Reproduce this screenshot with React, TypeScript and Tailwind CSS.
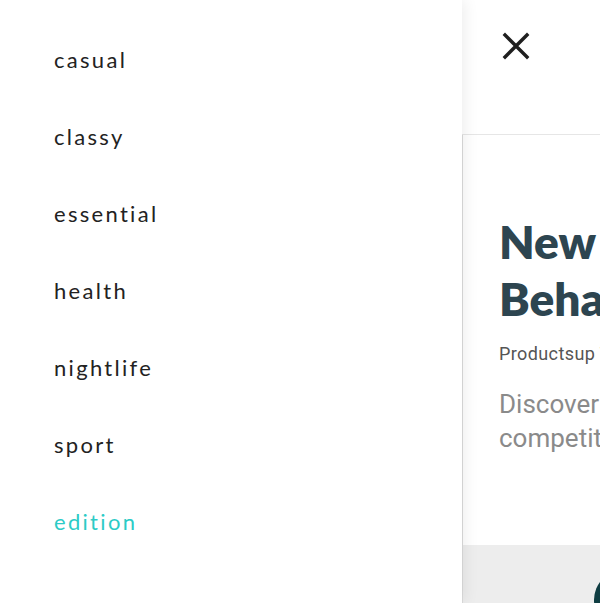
import React from 'react';

const MENU_ITEMS = ['casual', 'classy', 'essential', 'health', 'nightlife', 'sport', 'edition'];

const App: React.FC = () => {
    return (
        <div className="flex h-[603px] w-[600px] overflow-hidden bg-white">
            <aside className="relative z-10 w-[462px] shrink-0 bg-white pt-[44px] pl-[54px] shadow-[3px_0_14px_rgba(0,0,0,0.07)]">
                <ul className="flex flex-col gap-[45px]" style={{ fontFamily: 'Lato, "Open Sans", sans-serif' }}>
                    {MENU_ITEMS.map((item) => (
                        <li
                            key={item}
                            className={`h-[32px] text-[22px] leading-[32px] tracking-[2.3px] ${item === 'edition' ? 'text-[#2ccbc6]' : 'text-[#222222]'}`}
                        >
                            {item}
                        </li>
                    ))}
                </ul>
            </aside>
            <main className="flex min-w-0 flex-1 flex-col bg-white">
                <header className="flex h-[135px] shrink-0 items-start border-b border-[#e6e6e6] pt-[31px] pl-[39px]">
                    <svg width="30" height="30" viewBox="0 0 30 30" fill="none" stroke="#1f1f1f" strokeWidth="3.4" strokeLinecap="square">
                        <path d="M4 4L26 26M26 4L4 26" />
                    </svg>
                </header>
                <section className="flex flex-1 flex-col overflow-hidden border-l border-[#dcdcdc] bg-white">
                    <div className="h-[410px] shrink-0 pt-[78px] pl-[36px] whitespace-nowrap" style={{ fontFamily: 'Roboto, "Liberation Sans", sans-serif' }}>
                        <h1 className="text-[46px] leading-[57px] text-[#2d4550]" style={{ fontFamily: 'Lato, "Noto Sans", sans-serif', fontWeight: 800 }}>
                            New Consumer
                            <br />
                            Behaviors in 2021
                        </h1>
                        <p className="mt-[15px] text-[18px] leading-[24px] tracking-[0.4px] text-[#555555]">Productsup Team</p>
                        <p className="mt-[21px] text-[26px] leading-[34px] text-[#8a8a8a]">
                            Discover how
                            <br />
                            competitive brands
                        </p>
                    </div>
                    <div className="flex-1 bg-[#ededed] pt-[25px] pl-[131px]">
                        <div className="h-[60px] w-[60px] rounded-full bg-[#0f3d42]" />
                    </div>
                </section>
            </main>
        </div>
    );
};

export default App;
